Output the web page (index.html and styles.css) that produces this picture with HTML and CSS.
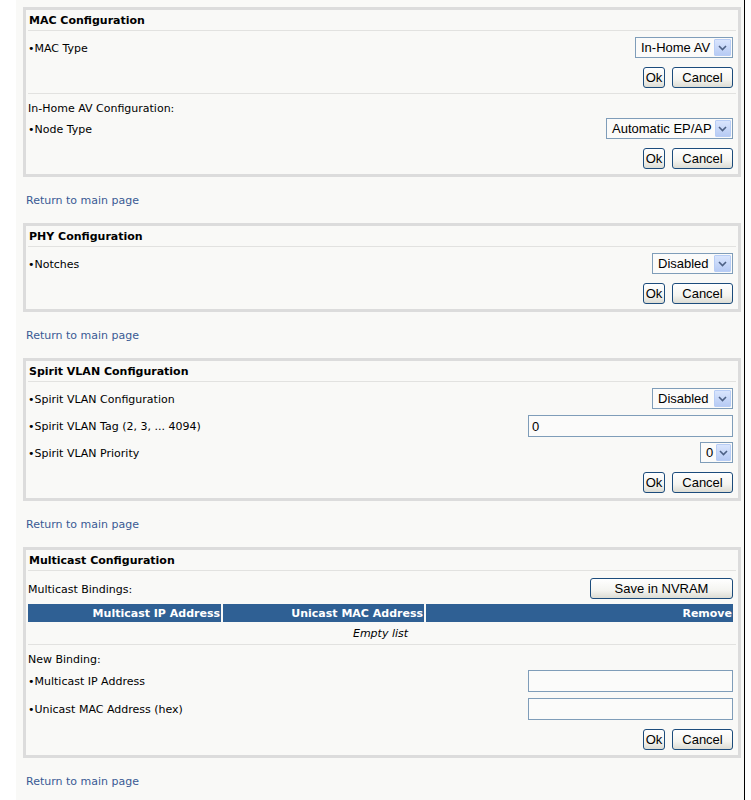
FILE: index.html
```html
<!DOCTYPE html>
<html>
<head>
<meta charset="utf-8">
<title>Configuration</title>
<link rel="stylesheet" href="styles.css">
</head>
<body>
<div class="page">

  <div class="box">
    <div class="box-title">MAC Configuration</div>
    <div class="section">
      <div class="row first">
        <span class="label">•MAC Type</span>
        <div class="select w-inhome"><span class="sel-text">In-Home AV</span><span class="sel-arrow"><svg width="9" height="6" viewBox="0 0 9 6"><path d="M1 1 L4.5 4.5 L8 1" fill="none" stroke="#4d6185" stroke-width="1.6"/></svg></span></div>
      </div>
      <div class="actions"><button class="btn btn-ok">Ok</button><button class="btn btn-cancel">Cancel</button></div>
    </div>
    <div class="section sep">
      <div class="row-text">In-Home AV Configuration:</div>
      <div class="row tight">
        <span class="label">•Node Type</span>
        <div class="select w-node"><span class="sel-text">Automatic EP/AP</span><span class="sel-arrow"><svg width="9" height="6" viewBox="0 0 9 6"><path d="M1 1 L4.5 4.5 L8 1" fill="none" stroke="#4d6185" stroke-width="1.6"/></svg></span></div>
      </div>
      <div class="actions"><button class="btn btn-ok">Ok</button><button class="btn btn-cancel">Cancel</button></div>
    </div>
  </div>
  <a class="back" href="#">Return to main page</a>

  <div class="box">
    <div class="box-title">PHY Configuration</div>
    <div class="section">
      <div class="row first">
        <span class="label">•Notches</span>
        <div class="select w-disabled"><span class="sel-text">Disabled</span><span class="sel-arrow"><svg width="9" height="6" viewBox="0 0 9 6"><path d="M1 1 L4.5 4.5 L8 1" fill="none" stroke="#4d6185" stroke-width="1.6"/></svg></span></div>
      </div>
      <div class="actions"><button class="btn btn-ok">Ok</button><button class="btn btn-cancel">Cancel</button></div>
    </div>
  </div>
  <a class="back" href="#">Return to main page</a>

  <div class="box">
    <div class="box-title">Spirit VLAN Configuration</div>
    <div class="section">
      <div class="row first">
        <span class="label">•Spirit VLAN Configuration</span>
        <div class="select w-disabled"><span class="sel-text">Disabled</span><span class="sel-arrow"><svg width="9" height="6" viewBox="0 0 9 6"><path d="M1 1 L4.5 4.5 L8 1" fill="none" stroke="#4d6185" stroke-width="1.6"/></svg></span></div>
      </div>
      <div class="row input-row">
        <span class="label">•Spirit VLAN Tag (2, 3, ... 4094)</span>
        <input class="field" type="text" value="0">
      </div>
      <div class="row after-input">
        <span class="label">•Spirit VLAN Priority</span>
        <div class="select w-zero"><span class="sel-text">0</span><span class="sel-arrow"><svg width="9" height="6" viewBox="0 0 9 6"><path d="M1 1 L4.5 4.5 L8 1" fill="none" stroke="#4d6185" stroke-width="1.6"/></svg></span></div>
      </div>
      <div class="actions"><button class="btn btn-ok">Ok</button><button class="btn btn-cancel">Cancel</button></div>
    </div>
  </div>
  <a class="back" href="#">Return to main page</a>

  <div class="box">
    <div class="box-title">Multicast Configuration</div>
    <div class="section">
      <div class="row first bindings-head">
        <span class="label">Multicast Bindings:</span>
        <button class="btn btn-save">Save in NVRAM</button>
      </div>
      <table class="bindings">
        <thead>
          <tr><th class="c1">Multicast IP Address</th><th class="c2">Unicast MAC Address</th><th class="c3">Remove</th></tr>
        </thead>
        <tbody>
          <tr><td colspan="3" class="empty">Empty list</td></tr>
        </tbody>
      </table>
    </div>
    <div class="section sep after-table">
      <div class="row-text">New Binding:</div>
      <div class="row input-row first-input">
        <span class="label">•Multicast IP Address</span>
        <input class="field" type="text" value="">
      </div>
      <div class="row input-row">
        <span class="label">•Unicast MAC Address (hex)</span>
        <input class="field" type="text" value="">
      </div>
      <div class="actions"><button class="btn btn-ok">Ok</button><button class="btn btn-cancel">Cancel</button></div>
    </div>
  </div>
  <a class="back" href="#">Return to main page</a>

</div>
</body>
</html>
```

FILE: styles.css
```css
html, body {
  margin: 0;
  padding: 0;
  background: #ffffff;
}

body {
  font-family: "DejaVu Sans", Verdana, sans-serif;
  font-size: 11px;
  color: #000000;
}

.page {
  margin-left: 16px;
  width: 718px;
  min-height: 800px;
  padding: 7px 3px 0 7px;
  background: #f9f9f7;
  border-right: 1px solid #000000;
}

.box {
  border: 3px solid #dcdcdc;
  padding: 0 5px 5px 2px;
}

.box-title {
  height: 20px;
  line-height: 22px;
  font-weight: bold;
  border-bottom: 1px solid #e2e2e0;
  margin-right: -3px;
  padding-left: 1px;
}

.section.sep {
  border-top: 1px solid #e2e2e0;
  margin-top: 5px;
  margin-right: -3px;
  padding-right: 3px;
}

.section.sep.after-table {
  margin-top: 2px;
}

.row {
  display: flex;
  align-items: center;
  justify-content: space-between;
  height: 21px;
  margin-top: 6px;
}

.row.tight {
  margin-top: 4px;
}

.row.input-row {
  height: 22px;
}

.row.after-input {
  margin-top: 5px;
}

.row.first-input {
  margin-top: 5px;
}

.row.bindings-head {
  margin-top: 7px;
}

.row-text {
  height: 14px;
  line-height: 17px;
  margin-top: 6px;
}

.label {
  white-space: nowrap;
  line-height: 14px;
  padding-top: 2px;
}

.select {
  display: flex;
  align-items: center;
  height: 21px;
  box-sizing: border-box;
  border: 1px solid #7f9db9;
  background: #fbfbfa;
  padding: 1px;
}

.sel-text {
  flex: 1;
  padding: 0 3px 0 4px;
  white-space: nowrap;
  font-family: "Liberation Sans", Arial, sans-serif;
  font-size: 13px;
  text-align: left;
}

.sel-arrow {
  width: 17px;
  height: 17px;
  box-sizing: border-box;
  border: 1px solid #b8cdf5;
  background: linear-gradient(#d9e5fd, #b7cbf4);
  display: flex;
  align-items: center;
  justify-content: center;
  border-radius: 1px;
}

.w-inhome { width: 98px; }
.w-node { width: 127px; }
.w-disabled { width: 81px; }
.w-zero { width: 33px; }

.field {
  width: 205px;
  height: 22px;
  box-sizing: border-box;
  border: 1px solid #7f9db9;
  background: #fbfbfa;
  margin: 0;
  padding: 0 3px;
  font-family: "Liberation Sans", Arial, sans-serif;
  font-size: 13px;
  color: #000;
  outline: none;
}

.actions {
  display: flex;
  justify-content: flex-end;
  gap: 7px;
  margin-top: 9px;
}

.btn {
  height: 21px;
  box-sizing: border-box;
  border: 1px solid #1c4c7c;
  border-radius: 3px;
  background: linear-gradient(#ffffff 0%, #f4f4f0 60%, #dcdcd4 100%);
  font-family: "Liberation Sans", Arial, sans-serif;
  font-size: 13px;
  color: #000;
  padding: 0;
  margin: 0;
  cursor: pointer;
}

.btn-ok { width: 22px; }
.btn-cancel { width: 61px; }
.btn-save { width: 143px; }

.bindings {
  border-collapse: separate;
  border-spacing: 2px 0;
  margin-top: 5px;
  margin-left: -2px;
  width: calc(100% + 4px);
}

.bindings th {
  background: #2f6094;
  color: #ffffff;
  font-weight: bold;
  text-align: right;
  height: 17px;
  padding: 1px 1px 0 0;
  white-space: nowrap;
}

.bindings th.c1 { width: 192px; }
.bindings th.c2 { width: 200px; }

.bindings td.empty {
  text-align: center;
  font-style: italic;
  height: 18px;
  padding: 2px 0 0 0;
}

.back {
  display: block;
  margin: 16px 0 16px 3px;
  height: 14px;
  line-height: 16px;
  color: #3a5a94;
  text-decoration: none;
}
```
